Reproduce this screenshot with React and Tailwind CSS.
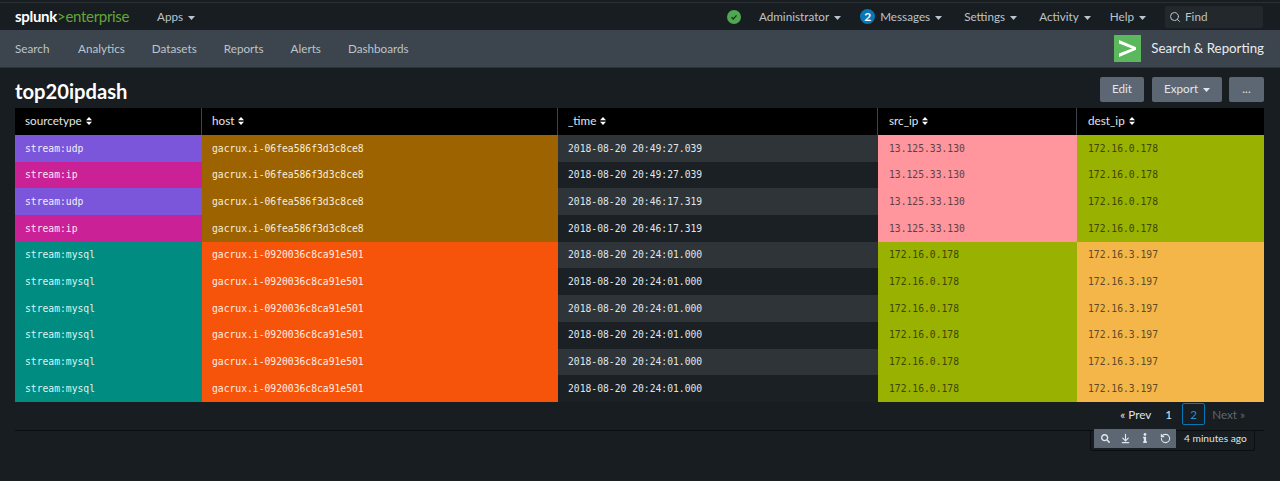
import React from "react";
import { Search, ArrowDownToLine, RotateCcw } from "lucide-react";
import { FaInfo, FaSearch } from "react-icons/fa";

const nav = ["Analytics", "Datasets", "Reports", "Alerts", "Dashboards"];

const UDP = "bg-[#7b56db] text-[#f3eefc]";
const IP = "bg-[#cb2196] text-[#fbe6f5]";
const MYSQL = "bg-[#008c80] text-[#dff3f0]";
const HOST_A = "bg-[#9d6300] text-[#f6eedf]";
const HOST_B = "bg-[#f6540b] text-[#ffeee3]";
const PINK = "bg-[#ff969d] text-[#5f4044]";
const GREEN = "bg-[#99b100] text-[#3e4500]";
const AMBER = "bg-[#f4b649] text-[#5c4a2a]";

const rows = [
  ["stream:udp", UDP, "gacrux.i-06fea586f3d3c8ce8", HOST_A, "2018-08-20 20:49:27.039", "13.125.33.130", PINK, "172.16.0.178", GREEN],
  ["stream:ip", IP, "gacrux.i-06fea586f3d3c8ce8", HOST_A, "2018-08-20 20:49:27.039", "13.125.33.130", PINK, "172.16.0.178", GREEN],
  ["stream:udp", UDP, "gacrux.i-06fea586f3d3c8ce8", HOST_A, "2018-08-20 20:46:17.319", "13.125.33.130", PINK, "172.16.0.178", GREEN],
  ["stream:ip", IP, "gacrux.i-06fea586f3d3c8ce8", HOST_A, "2018-08-20 20:46:17.319", "13.125.33.130", PINK, "172.16.0.178", GREEN],
  ["stream:mysql", MYSQL, "gacrux.i-0920036c8ca91e501", HOST_B, "2018-08-20 20:24:01.000", "172.16.0.178", GREEN, "172.16.3.197", AMBER],
  ["stream:mysql", MYSQL, "gacrux.i-0920036c8ca91e501", HOST_B, "2018-08-20 20:24:01.000", "172.16.0.178", GREEN, "172.16.3.197", AMBER],
  ["stream:mysql", MYSQL, "gacrux.i-0920036c8ca91e501", HOST_B, "2018-08-20 20:24:01.000", "172.16.0.178", GREEN, "172.16.3.197", AMBER],
  ["stream:mysql", MYSQL, "gacrux.i-0920036c8ca91e501", HOST_B, "2018-08-20 20:24:01.000", "172.16.0.178", GREEN, "172.16.3.197", AMBER],
  ["stream:mysql", MYSQL, "gacrux.i-0920036c8ca91e501", HOST_B, "2018-08-20 20:24:01.000", "172.16.0.178", GREEN, "172.16.3.197", AMBER],
  ["stream:mysql", MYSQL, "gacrux.i-0920036c8ca91e501", HOST_B, "2018-08-20 20:24:01.000", "172.16.0.178", GREEN, "172.16.3.197", AMBER],
];

const Caret = () => (
  <svg width="7" height="4" viewBox="0 0 7 4" className="ml-[5px] inline-block align-middle">
    <path d="M0 0h7L3.5 4z" fill="currentColor" />
  </svg>
);

const Sort = () => (
  <svg width="6" height="8" viewBox="0 0 6 8" className="ml-[4px] inline-block text-white">
    <path d="M3 0l3 3.2H0zM3 8L0 4.8h6z" fill="currentColor" />
  </svg>
);

const Cell = ({ className, children }) => (
  <div className={`flex items-center pt-[1px] ${className}`}>{children}</div>
);

const App = () => {
  return (
    <div className="h-[481px] overflow-hidden bg-[#171d21] font-['Lato',sans-serif] text-[11.7px] text-[#bcc4cc]">
      {/* Top bar */}
      <div className="mt-[2px] flex h-[28px] items-center border-t border-[#2b3033] pl-[15px] pr-[17px]">
        <div className="w-[142px] text-[15px] leading-none tracking-[-0.3px]">
          <span className="font-bold text-white">splunk</span>
          <span className="text-[#65a637]">&gt;enterprise</span>
        </div>
        <span>
          Apps
          <Caret />
        </span>
        <div className="ml-auto flex items-center">
          <span className="mr-[18px] flex h-[14px] w-[14px] items-center justify-center rounded-full bg-[#4fa74f]">
            <svg width="8" height="8" viewBox="0 0 8 8">
              <path d="M1.5 4.2l1.8 1.8 3.2-3.6" fill="none" stroke="#14361a" strokeWidth="1.3" />
            </svg>
          </span>
          <span className="mr-[19px]">
            Administrator
            <Caret />
          </span>
          <span className="mr-[5px] flex h-[15px] w-[15px] items-center justify-center rounded-full bg-[#0877b5] text-[12px] font-bold text-white">
            2
          </span>
          <span className="mr-[22px]">
            Messages
            <Caret />
          </span>
          <span className="mr-[22px]">
            Settings
            <Caret />
          </span>
          <span className="mr-[19px]">
            Activity
            <Caret />
          </span>
          <span className="mr-[19px]">
            Help
            <Caret />
          </span>
          <div className="flex h-[22px] w-[98px] items-center gap-[4px] rounded-[2px] bg-[#22282c] pl-[4px]">
            <Search size={12} strokeWidth={2} />
            <span>Find</span>
          </div>
        </div>
      </div>

      {/* App bar */}
      <div className="flex h-[38px] items-center border-b border-[#2b3238] bg-[#3c444d] pl-[15px] pr-[16px]">
        <span className="mr-[28px] w-[35px]">Search</span>
        <div className="flex gap-[27px]">
          {nav.map((item) => (
            <span key={item}>{item}</span>
          ))}
        </div>
        <div className="ml-auto flex items-center gap-[10px]">
          <div className="flex h-[27px] w-[27px] items-center justify-center bg-[#5cb85c]">
            <svg width="21" height="21" viewBox="0 0 21 21">
              <path d="M2 2l17 7.2v2.6L2 19v-3.4l13-5.1L2 5.4z" fill="#fff" />
            </svg>
          </div>
          <span className="text-[13.3px] text-[#e8ecef]">Search &amp; Reporting</span>
        </div>
      </div>

      {/* Dashboard header */}
      <div className="flex h-[40px] items-center pl-[15px] pr-[16px]">
        <h1 className="mt-[6px] text-[20.2px] font-bold leading-none text-white">top20ipdash</h1>
        <div className="ml-auto flex gap-[7px] pt-[2px] text-[#e1e6eb]">
          <button className="mr-[1px] h-[25px] w-[44px] rounded-[2px] bg-[#5c6773]">Edit</button>
          <button className="h-[25px] w-[70px] rounded-[2px] bg-[#5c6773]">
            Export
            <Caret />
          </button>
          <button className="h-[25px] w-[35px] rounded-[2px] bg-[#5c6773]">...</button>
        </div>
      </div>

      {/* Table */}
      <div className="ml-[15px] mr-[16px]">
        <div className="grid h-[27px] grid-cols-[187px_356px_320px_199px_187px] bg-black text-[#e1e6eb]">
          {["sourcetype", "host", "_time", "src_ip", "dest_ip"].map((col, i) => (
            <div
              key={col}
              className={`flex items-center pb-[2px] ${i < 3 ? "pl-[10px]" : "pl-[11px]"} ${i < 4 ? "border-r border-[#3c444d]" : ""}`}
            >
              {col}
              <Sort />
            </div>
          ))}
        </div>
        <div className="font-['DejaVu_Sans_Mono',monospace] text-[9.7px]">
          {rows.map((r, i) => (
            <div
              key={i}
              className="grid h-[26.7px] grid-cols-[187px_356px_320px_199px_187px]"
            >
              <Cell className={`pl-[10px] ${r[1]}`}>{r[0]}</Cell>
              <Cell className={`pl-[10px] ${r[3]}`}>{r[2]}</Cell>
              <Cell className={`pl-[10px] text-[#e1e6eb] ${i % 2 === 0 ? "bg-[#2e3438]" : "bg-[#1a2024]"}`}>
                {r[4]}
              </Cell>
              <Cell className={`pl-[11px] ${r[6]}`}>{r[5]}</Cell>
              <Cell className={`pl-[11px] ${r[8]}`}>{r[7]}</Cell>
            </div>
          ))}
        </div>

        {/* Pagination */}
        <div className="flex h-[29px] items-center justify-end border-b border-[#0b0e10] pb-[3px] pr-[19px]">
          <span className="mr-[14px] text-[#dfe4e9]">« Prev</span>
          <span className="mr-[10px] text-[#dfe4e9]">1</span>
          <span className="mr-[7px] flex h-[22px] w-[23px] items-center justify-center rounded-[2px] border border-[#0877b5] text-[#1e93d6]">
            2
          </span>
          <span className="text-[#5c6773]">Next »</span>
        </div>
      </div>

      {/* Panel footer */}
      <div className="ml-[1090px] flex h-[20px] w-[165px] rounded-b-[3px] border-b border-l border-r border-[#0b0e10] pl-[3px] text-[10.2px] text-[#dfe4e9]">
        <div className="-mt-[2px] flex h-[19px] w-[82px] items-center bg-[#5c6773] px-[1px] text-[#e1e6eb]">
          <span className="flex w-[20px] justify-center">
            <FaSearch size={9} />
          </span>
          <span className="flex w-[20px] justify-center">
            <ArrowDownToLine size={11} strokeWidth={2.5} />
          </span>
          <span className="flex w-[20px] justify-center">
            <FaInfo size={10} />
          </span>
          <span className="flex w-[20px] justify-center">
            <RotateCcw size={11} strokeWidth={2.5} />
          </span>
        </div>
        <span className="flex items-center pb-[3px] pl-[8px]">4 minutes ago</span>
      </div>
    </div>
  );
};

export default App;
